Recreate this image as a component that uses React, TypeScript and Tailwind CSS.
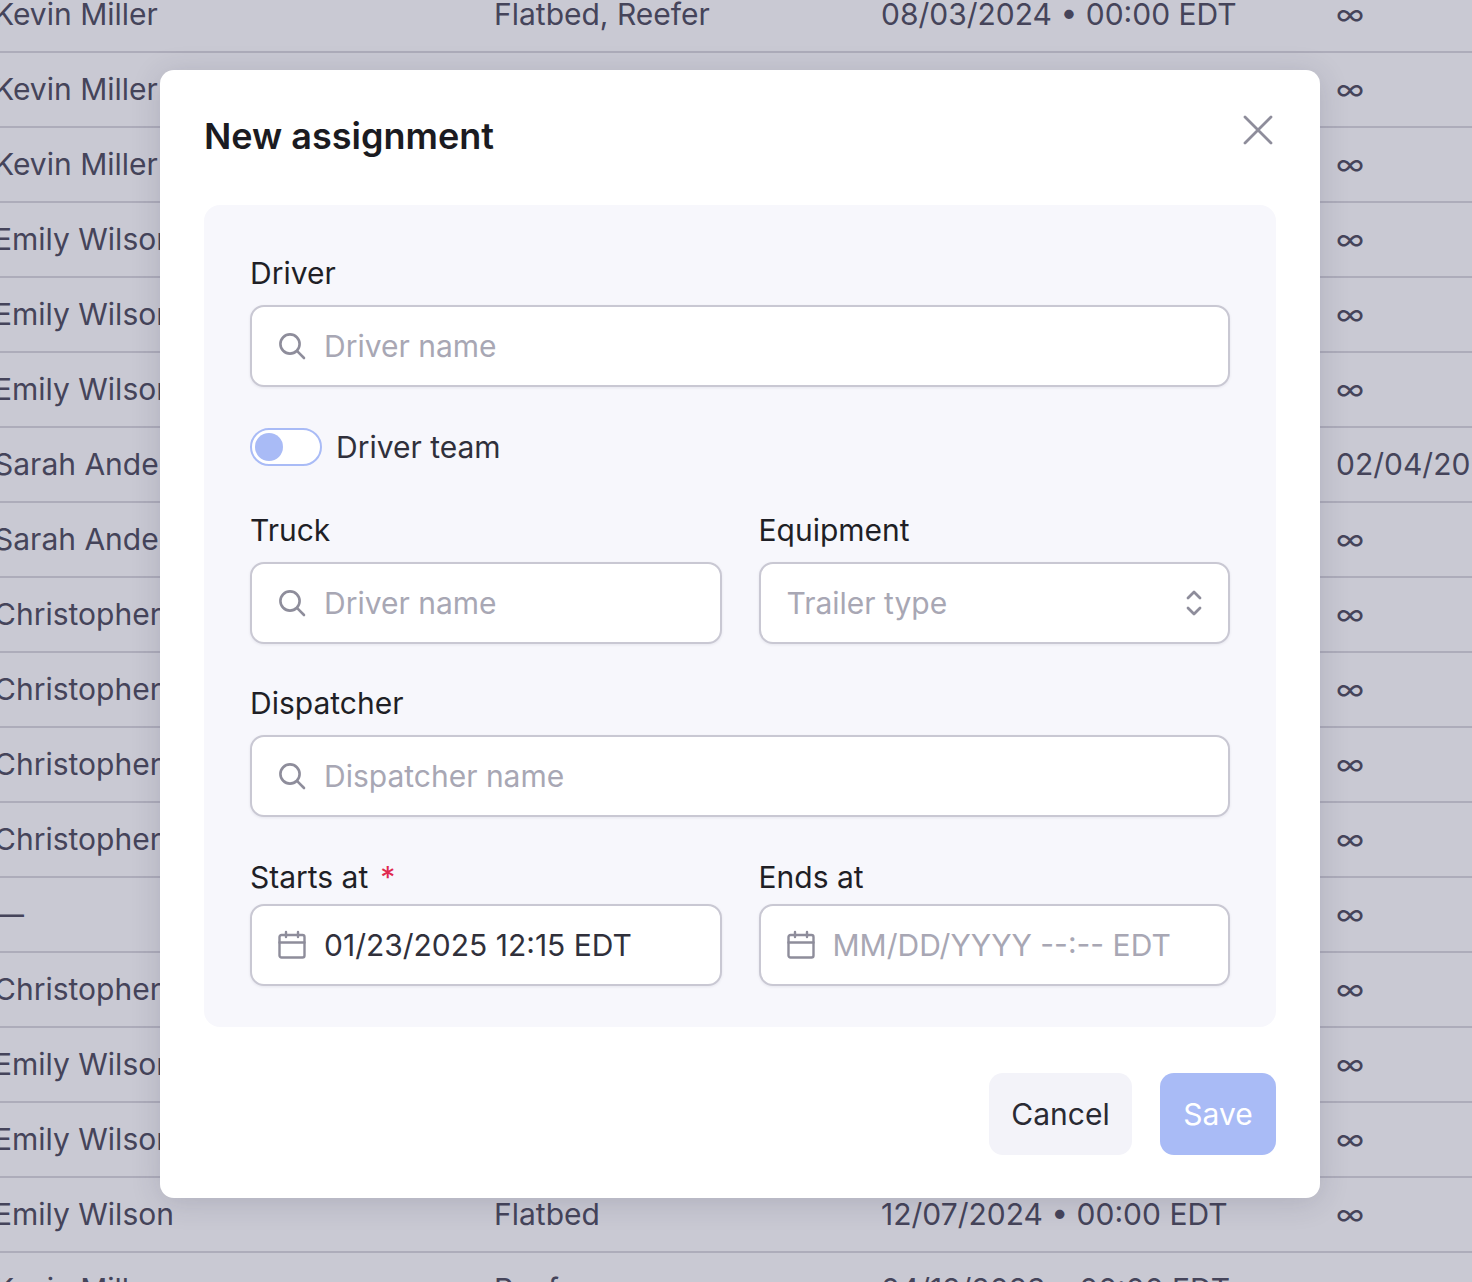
import React from "react";

const rows: [string, string, string, string][] = [
  ["Kevin Miller", "Flatbed, Reefer", "08/03/2024 • 00:00 EDT", "∞"],
  ["Kevin Miller", "Flatbed", "08/03/2024 • 00:00 EDT", "∞"],
  ["Kevin Miller", "Reefer", "08/03/2024 • 00:00 EDT", "∞"],
  ["Emily Wilson", "Flatbed", "12/07/2024 • 00:00 EDT", "∞"],
  ["Emily Wilson", "Flatbed", "12/07/2024 • 00:00 EDT", "∞"],
  ["Emily Wilson", "Flatbed", "12/07/2024 • 00:00 EDT", "∞"],
  ["Sarah Anderson", "Reefer", "01/04/2024 • 00:00 EDT", "02/04/2025"],
  ["Sarah Anderson", "Reefer", "01/04/2024 • 00:00 EDT", "∞"],
  ["Christopher Lee", "Flatbed", "03/11/2024 • 00:00 EDT", "∞"],
  ["Christopher Lee", "Flatbed", "03/11/2024 • 00:00 EDT", "∞"],
  ["Christopher Lee", "Flatbed", "03/11/2024 • 00:00 EDT", "∞"],
  ["Christopher Lee", "Flatbed", "03/11/2024 • 00:00 EDT", "∞"],
  ["—", "Flatbed", "03/11/2024 • 00:00 EDT", "∞"],
  ["Christopher Lee", "Flatbed", "03/11/2024 • 00:00 EDT", "∞"],
  ["Emily Wilson", "Flatbed", "12/07/2024 • 00:00 EDT", "∞"],
  ["Emily Wilson", "Flatbed", "12/07/2024 • 00:00 EDT", "∞"],
  ["Emily Wilson", "Flatbed", "12/07/2024 • 00:00 EDT", "∞"],
  ["Kevin Miller", "Reefer", "04/12/2023 • 00:00 EDT", "∞"],
];

function SearchIcon() {
  return (
    <svg width="30" height="30" viewBox="0 0 30 30" fill="none" stroke="#8e8d9b" strokeWidth="2.6" strokeLinecap="round" className="shrink-0">
      <circle cx="13" cy="13" r="9.6" />
      <path d="M20.2 20.2 L27 27" />
    </svg>
  );
}

function CalendarIcon() {
  return (
    <svg width="30" height="30" viewBox="0 0 30 30" fill="none" stroke="#8e8d9b" strokeWidth="2.4" strokeLinecap="round" strokeLinejoin="round" className="shrink-0">
      <rect x="2.5" y="5" width="25" height="22.5" rx="2" />
      <path d="M2.5 12.5 H27.5 M9 2 V7 M21 2 V7" />
    </svg>
  );
}

function Label({ children }: { children: React.ReactNode }) {
  return <div className="h-[45px] text-[30px] leading-[45px] text-[#1f1f26]">{children}</div>;
}

function SearchField({ placeholder }: { placeholder: string }) {
  return (
    <div className="flex h-[82px] items-center gap-[17px] rounded-[14px] border-2 border-[#c9c8d3] bg-white pl-[25px] shadow-[0_1px_3px_rgba(30,30,60,0.08)]">
      <SearchIcon />
      <span className="text-[30px] text-[#a8a7b4]">{placeholder}</span>
    </div>
  );
}

function DateField({ value, muted }: { value: string; muted?: boolean }) {
  return (
    <div className="flex h-[82px] items-center gap-[17px] rounded-[14px] border-2 border-[#c9c8d3] bg-white pl-[25px] shadow-[0_1px_3px_rgba(30,30,60,0.08)]">
      <CalendarIcon />
      <span className={muted ? "text-[30px] text-[#a8a7b4]" : "text-[30px] text-[#30303b]"}>{value}</span>
    </div>
  );
}

export default function App() {
  return (
    <div className="relative h-[1282px] w-[1472px] overflow-hidden bg-[#c9c9d3] font-['Inter',sans-serif]">
      <div className="ml-[-6px] mt-[-22px] w-[1478px]">
        {rows.map((r, i) => (
          <div key={i} className="grid h-[75px] grid-cols-[500px_387px_455px_136px] items-center whitespace-nowrap border-b-2 border-[#adacba] text-[30px] text-[#45445a]">
            <span>{r[0]}</span>
            <span>{r[1]}</span>
            <span>{r[2]}</span>
            <span>{r[3]}</span>
          </div>
        ))}
      </div>

      <div className="absolute left-[160px] top-[70px] h-[1128px] w-[1160px] rounded-[14px] bg-white px-[44px] shadow-[0_4px_30px_rgba(40,40,70,0.16)]">
        <div className="flex h-[135px] items-center justify-between pb-[4px]">
          <h2 className="text-[36px] font-semibold text-[#1b1b21]">New assignment</h2>
          <button className="mb-[12px] mr-[2px]">
            <svg width="32" height="32" viewBox="0 0 32 32" fill="none" stroke="#8e8d9b" strokeWidth="2.8" strokeLinecap="round">
              <path d="M3 3 L29 29 M29 3 L3 29" />
            </svg>
          </button>
        </div>

        <div className="h-[822px] rounded-[16px] bg-[#f7f7fc] px-[46px] pt-[46px]">
          <Label>Driver</Label>
          <div className="mt-[9px]">
            <SearchField placeholder="Driver name" />
          </div>

          <div className="mt-[41px] flex h-[38px] items-center gap-[14px]">
            <div className="flex h-[38px] w-[72px] items-center rounded-full border-2 border-[#a9bbf6] bg-white pl-[3px]">
              <div className="h-[28px] w-[28px] rounded-full bg-[#a9bbf6]" />
            </div>
            <span className="text-[30px] text-[#30303b]">Driver team</span>
          </div>

          <div className="mt-[42px] grid grid-cols-2 gap-x-[37px]">
            <div>
              <Label>Truck</Label>
              <div className="mt-[9px]">
                <SearchField placeholder="Driver name" />
              </div>
            </div>
            <div>
              <Label>Equipment</Label>
              <div className="mt-[9px] flex h-[82px] items-center justify-between rounded-[14px] border-2 border-[#c9c8d3] bg-white pl-[26px] pr-[25px] shadow-[0_1px_3px_rgba(30,30,60,0.08)]">
                <span className="text-[30px] text-[#a8a7b4]">Trailer type</span>
                <svg width="18" height="28" viewBox="0 0 18 28" fill="none" stroke="#8e8d9b" strokeWidth="2.8" strokeLinecap="round" strokeLinejoin="round">
                  <path d="M3 9 L9 3 L15 9 M3 19 L9 25 L15 19" />
                </svg>
              </div>
            </div>
          </div>

          <div className="mt-[37px]">
            <Label>Dispatcher</Label>
            <div className="mt-[9px]">
              <SearchField placeholder="Dispatcher name" />
            </div>
          </div>

          <div className="mt-[38px] grid grid-cols-2 gap-x-[37px]">
            <div>
              <Label>
                Starts at<span className="ml-[12px] text-[#e0294f]">*</span>
              </Label>
              <div className="mt-[4px]">
                <DateField value="01/23/2025 12:15 EDT" />
              </div>
            </div>
            <div>
              <Label>Ends at</Label>
              <div className="mt-[4px]">
                <DateField value="MM/DD/YYYY --:-- EDT" muted />
              </div>
            </div>
          </div>
        </div>

        <div className="mt-[46px] flex justify-end gap-[28px]">
          <button className="h-[82px] w-[143px] rounded-[14px] bg-[#f3f3f9] text-[30px] text-[#2a2a33]">Cancel</button>
          <button className="h-[82px] w-[116px] rounded-[14px] bg-[#a9bbf6] text-[30px] text-white">Save</button>
        </div>
      </div>
    </div>
  );
}
